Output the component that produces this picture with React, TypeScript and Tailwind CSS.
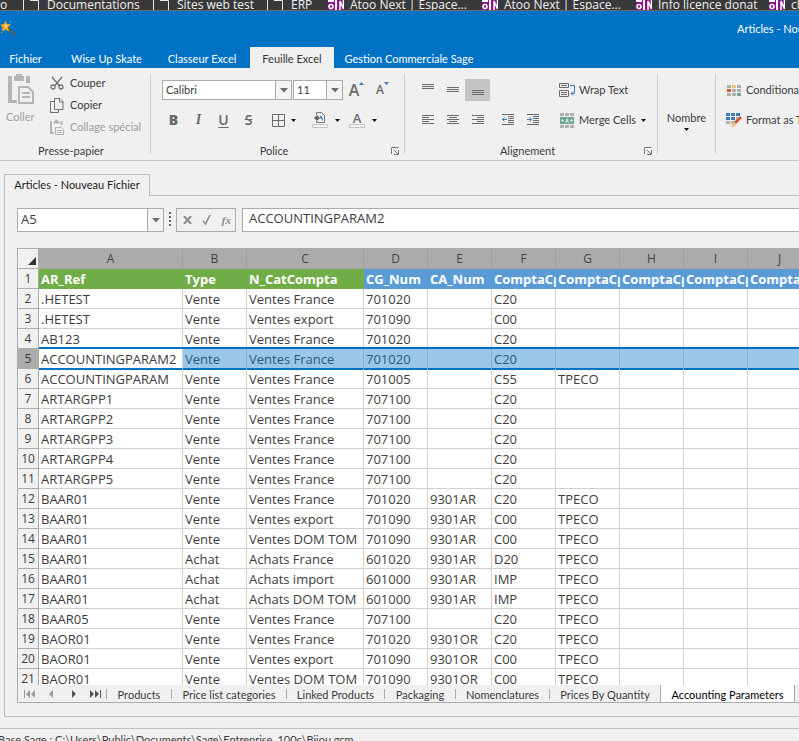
import type { ReactNode } from 'react';

const bookmarks = [
  { label: 'Documentations', kind: 'page', width: 'w-[130px]' },
  { label: 'Sites web test', kind: 'page', width: 'w-[114px]' },
  { label: 'ERP', kind: 'page', width: 'w-[61px]' },
  { label: 'Atoo Next | Espace...', kind: 'atoo', width: 'w-[154px]' },
  { label: 'Atoo Next | Espace...', kind: 'atoo', width: 'w-[154px]' },
  { label: 'Info licence donat', kind: 'atoo', width: 'w-[133px]' },
  { label: 'cl', kind: 'atoo', width: 'w-[133px]' },
];

const ribbonTabs = [
  { label: 'Fichier', width: 'w-[51px]' },
  { label: 'Wise Up Skate', width: 'w-[111px]' },
  { label: 'Classeur Excel', width: 'w-[80px]' },
  { label: 'Feuille Excel', width: 'w-[84px] ml-2', active: true },
  { label: 'Gestion Commerciale Sage', width: 'w-[150px]' },
];

const columns = [
  { letter: 'A', title: 'AR_Ref', width: 'w-[144px]' },
  { letter: 'B', title: 'Type', width: 'w-[64px]' },
  { letter: 'C', title: 'N_CatCompta', width: 'w-[117px]' },
  { letter: 'D', title: 'CG_Num', width: 'w-[64px]' },
  { letter: 'E', title: 'CA_Num', width: 'w-[64px]' },
  { letter: 'F', title: 'ComptaCpt', width: 'w-[64px]' },
  { letter: 'G', title: 'ComptaCpt', width: 'w-[64px]' },
  { letter: 'H', title: 'ComptaCpt', width: 'w-[64px]' },
  { letter: 'I', title: 'ComptaCpt', width: 'w-[64px]' },
  { letter: 'J', title: 'ComptaCpt', width: 'w-[64px]' },
];

const rows = [
  ['.HETEST', 'Vente', 'Ventes France', '701020', '', 'C20', ''],
  ['.HETEST', 'Vente', 'Ventes export', '701090', '', 'C00', ''],
  ['AB123', 'Vente', 'Ventes France', '701020', '', 'C20', ''],
  ['ACCOUNTINGPARAM2', 'Vente', 'Ventes France', '701020', '', 'C20', ''],
  ['ACCOUNTINGPARAM', 'Vente', 'Ventes France', '701005', '', 'C55', 'TPECO'],
  ['ARTARGPP1', 'Vente', 'Ventes France', '707100', '', 'C20', ''],
  ['ARTARGPP2', 'Vente', 'Ventes France', '707100', '', 'C20', ''],
  ['ARTARGPP3', 'Vente', 'Ventes France', '707100', '', 'C20', ''],
  ['ARTARGPP4', 'Vente', 'Ventes France', '707100', '', 'C20', ''],
  ['ARTARGPP5', 'Vente', 'Ventes France', '707100', '', 'C20', ''],
  ['BAAR01', 'Vente', 'Ventes France', '701020', '9301AR', 'C20', 'TPECO'],
  ['BAAR01', 'Vente', 'Ventes export', '701090', '9301AR', 'C00', 'TPECO'],
  ['BAAR01', 'Vente', 'Ventes DOM TOM', '701090', '9301AR', 'C00', 'TPECO'],
  ['BAAR01', 'Achat', 'Achats France', '601020', '9301AR', 'D20', 'TPECO'],
  ['BAAR01', 'Achat', 'Achats import', '601000', '9301AR', 'IMP', 'TPECO'],
  ['BAAR01', 'Achat', 'Achats DOM TOM', '601000', '9301AR', 'IMP', 'TPECO'],
  ['BAAR05', 'Vente', 'Ventes France', '707100', '', 'C20', 'TPECO'],
  ['BAOR01', 'Vente', 'Ventes France', '701020', '9301OR', 'C20', 'TPECO'],
  ['BAOR01', 'Vente', 'Ventes export', '701090', '9301OR', 'C00', 'TPECO'],
  ['BAOR01', 'Vente', 'Ventes DOM TOM', '701090', '9301OR', 'C00', 'TPECO'],
];

const sheetTabs = [
  { label: 'Products', width: 'w-[65px]' },
  { label: 'Price list categories', width: 'w-[115px]' },
  { label: 'Linked Products', width: 'w-[98px]' },
  { label: 'Packaging', width: 'w-[71px]' },
  { label: 'Nomenclatures', width: 'w-[94px]' },
  { label: 'Prices By Quantity', width: 'w-[111px]' },
  { label: 'Accounting Parameters', width: 'w-[134px]', active: true },
];

const selectedRow = 5;

function PageIcon() {
  return (
    <svg width="16" height="10" viewBox="0 0 16 10" fill="none" stroke="#e8e8e8">
      <path d="M0.5 0v10M7 0.5h8.5V10" />
    </svg>
  );
}

function AtooIcon() {
  return (
    <svg width="16" height="10" viewBox="0 0 16 10" fill="none">
      <path d="M0 0h16v10H0z" fill="#8b128b" />
      <path d="M0 0h6v2H0zM7 0h2v10H7z" fill="#fff" />
      <circle cx="3" cy="6.5" r="2" stroke="#fff" strokeWidth="1.500" />
      <path d="M12 10V1l3.5 8V0" stroke="#fff" strokeWidth="1.5" />
    </svg>
  );
}

function WandIcon() {
  return (
    <svg width="16" height="16" viewBox="0 0 16 16">
      <path d="M8 8l7 7" stroke="#6b5a45" strokeWidth="2" />
      <path d="M5.5 1l1.500 3 4 .3-3 3 1 4.200-3.500-2-3.500 2 .5-4-2-3 3.500-.5z" fill="#f7a823" />
      <path d="M6 4l1 2-1 2-2-2z" fill="#ffe27a" />
      <path d="M10 1h1v1h-1zM1 12h1v1H1z" fill="#f7a823" />
    </svg>
  );
}

function Caret() {
  return (
    <svg width="5" height="3" viewBox="0 0 5 3" className="shrink-0">
      <path d="M0 0h5L2.500 3z" fill="#111" />
    </svg>
  );
}

function DropArrow() {
  return (
    <svg width="8" height="5" viewBox="0 0 8 5">
      <path d="M0 0h8L4 4.500z" fill="#6d6d6d" />
    </svg>
  );
}

function PasteIcon() {
  return (
    <svg width="26" height="30" viewBox="0 0 26 30" fill="none">
      <path d="M0 2h4v24h5v3H0zM18 2h4v7h-4z" fill="#b5b5b5" />
      <path d="M6 2h2V0h6v2h2v5H6z" fill="#b5b5b5" />
      <path d="M11 13h9l5 5v11H11z" stroke="#b5b5b5" strokeWidth="2" />
      <path d="M14 19h8M14 23h8" stroke="#b5b5b5" strokeWidth="2" />
    </svg>
  );
}

function CutIcon() {
  return (
    <svg width="14" height="14" viewBox="0 0 14 14" fill="none" stroke="#6f6f6f">
      <path d="M2 1l7.500 9M12 1L4.500 10" strokeWidth="1.3" />
      <circle cx="3" cy="11" r="2" strokeWidth="1.300" />
      <circle cx="11" cy="11" r="2" strokeWidth="1.300" />
    </svg>
  );
}

function CopyIcon() {
  return (
    <svg width="14" height="15" viewBox="0 0 14 15" fill="#f0f0f0" stroke="#6f6f6f">
      <path d="M4 3.500H.5v11h8V12" />
      <path d="M4.500 .5h5.500l3 3v8H4.500z" />
      <path d="M9.500 .5v3.500H13" />
    </svg>
  );
}

function PasteSpecialIcon() {
  return (
    <svg width="14" height="15" viewBox="0 0 14 15" fill="none" stroke="#b5b5b5">
      <path d="M1 1v12h3M11.500 1v4" strokeWidth="2" />
      <path d="M3.500 2.500h6M5 1h3" strokeWidth="2" />
      <path d="M5.500 7.500h6l2 2v5h-8z" fill="#f0f0f0" />
      <path d="M7 10.500h5M7 12.500h5" />
    </svg>
  );
}

function LauncherIcon() {
  return (
    <svg width="8" height="8" viewBox="0 0 8 8" fill="none" stroke="#777">
      <path d="M.5 7V.5H7.500M3 3l4 4M7.500 3v4.500H3" />
    </svg>
  );
}

function LinesIcon({ d }: { d: string }) {
  return (
    <svg width="12" height="12" viewBox="0 0 12 12" fill="none" stroke="#6a6a6a">
      <path d={d} />
    </svg>
  );
}

function IndentIcon({ out }: { out?: boolean }) {
  return (
    <svg width="12" height="12" viewBox="0 0 12 12" fill="none" stroke="#6a6a6a">
      <path d="M0 .5h12M6 2.500h6M6 4.500h6M6 6.500h6M6 8.500h6M0 10.500h12" />
      <path d={out ? 'M0 5.500h5M2.500 3.500l-2 2 2 2' : 'M0 5.500h5M2.500 3.500l2 2-2 2'} stroke="#3d7ab8" />
    </svg>
  );
}

function BordersIcon() {
  return (
    <svg width="13" height="13" viewBox="0 0 13 13" fill="none" stroke="#6a6a6a">
      <path d="M.5.5h12v12H.5zM6.500.5v12M.5 6.500h12" />
    </svg>
  );
}

function FillIcon() {
  return (
    <svg width="16" height="16" viewBox="0 0 16 16" fill="none">
      <path d="M4.500 3V.5h5l3 3v7h-8V9" stroke="#777" />
      <path d="M2 6l3-3 3 3-3 3z" fill="#666" />
      <path d="M8 4c2 0 3 2 3 5-1-1-1-2-3-3z" fill="#3d7ab8" />
      <path d="M.5 12.500h15v3H.5z" stroke="#c4c4c4" fill="#f4f4f4" />
    </svg>
  );
}

function WrapIcon() {
  return (
    <svg width="16" height="15" viewBox="0 0 16 15" fill="none" stroke="#6a6a6a">
      <path d="M.5.5h9v4h-9zM2 2.500h6M.5 7.500h9v6h-9zM2 9.500h6M2 11.500h6" />
      <path d="M11 2.500h4.500v8H12M14 8.500l-2 2 2 2" stroke="#3d7ab8" />
    </svg>
  );
}

function MergeIcon() {
  return (
    <svg width="14" height="15" viewBox="0 0 14 15" fill="none">
      <path d="M0 0h4v3H0zM5 0h4v3H5zM10 0h4v3h-4zM0 12h4v3H0zM5 12h4v3H5zM10 12h4v3h-4z" fill="#b0b0b0" />
      <path d="M0 4h14v7H0z" fill="#6fa592" />
      <path d="M1 7.500h3M2.500 6v3M10 7.500h3M11.500 6v3M5.500 10L7 5.500 8.500 10M6 8.500h2" stroke="#e4f0ec" strokeWidth=".8" />
    </svg>
  );
}

function ConditionalIcon() {
  return (
    <svg width="14" height="11" viewBox="0 0 14 11">
      <path d="M0 0h4v3H0zM10 0h4v3h-4zM5 4h4v3H5zM10 4h4v3h-4zM0 8h4v3H0zM5 8h4v3H5z" fill="#b0b0b0" />
      <path d="M5 0h4v3H5z" fill="#eac282" />
      <path d="M0 4h4v3H0z" fill="#d65532" />
      <path d="M10 8h4v3h-4z" fill="#6fa592" />
    </svg>
  );
}

function FormatTableIcon() {
  return (
    <svg width="16" height="15" viewBox="0 0 16 15">
      <path d="M0 0h4v3H0zM5 0h4v3H5zM10 0h4v3h-4zM0 4h4v3H0zM5 4h4v3H5z" fill="#3d7ab8" />
      <path d="M10 4h3v3h-3zM0 8h4v3H0zM5 8h4v3H5z" fill="#b0b0b0" />
      <path d="M14 3l2 2-6 6-2-2z" fill="#d65532" />
      <path d="M8 9l2 2c-1 3-3 3-5 3 1-1 1-4 3-5z" fill="#eac282" />
    </svg>
  );
}

function NavIcon({ d, dim }: { d: string; dim?: boolean }) {
  return (
    <svg width="11" height="8" viewBox="0 0 11 8" fill={dim ? '#9a9a9a' : '#555'}>
      <path d={d} />
    </svg>
  );
}

function Separator() {
  return <div className="my-1.5 w-px shrink-0 bg-[#cdcdcd]" />;
}

function Group({ label, width, launcher, children }: { label?: string; width: string; launcher?: boolean; children: ReactNode }) {
  return (
    <section className={`flex shrink-0 flex-col pt-1 ${width}`}>
      <div className="h-[66px]">{children}</div>
      {label && (
        <div className={`mt-[5px] flex h-4 items-center ${launcher ? 'pr-[5px] pl-1.5' : 'pr-2'}`}>
          <span className="flex-1 text-center">{label}</span>
          {launcher && (
            <button aria-label={`Options ${label}`}>
              <LauncherIcon />
            </button>
          )}
        </div>
      )}
    </section>
  );
}

function Combo({ label, value, width }: { label: string; value: string; width: string }) {
  return (
    <div className={`flex h-5 border border-[#ababab] bg-white ${width}`}>
      <select aria-label={label} className="min-w-0 flex-1 appearance-none pl-[3px] outline-none">
        <option>{value}</option>
      </select>
      <span className="flex w-4 items-center justify-center border-l border-[#ababab] bg-[#f4f4f4]">
        <DropArrow />
      </span>
    </div>
  );
}

function IconButton({ label, active, children }: { label: string; active?: boolean; children: ReactNode }) {
  return (
    <button
      aria-label={label}
      className={`flex h-[22px] w-[25px] items-center justify-center ${active ? 'bg-[#c5c5c5]' : ''}`}
    >
      {children}
    </button>
  );
}

function TitleBar() {
  return (
    <header className="shrink-0 bg-[#0072c6] text-white">
      <div className="flex h-9 justify-between">
        <div className="pt-[9px]">
          <WandIcon />
        </div>
        <h1 className="w-[62px] overflow-hidden pt-2.5 leading-4 whitespace-nowrap">Articles - Nouveau Fichier</h1>
      </div>
      <nav className="flex h-[21px] whitespace-nowrap">
        {ribbonTabs.map((tab) => (
          <button
            key={tab.label}
            className={`shrink-0 pt-1 ${tab.width} ${tab.active ? 'bg-[#f0f0f0] text-[#333]' : ''}`}
          >
            {tab.label}
          </button>
        ))}
      </nav>
    </header>
  );
}

function Ribbon() {
  return (
    <div className="flex h-[93px] shrink-0 overflow-hidden border-b border-[#c6c6c6] whitespace-nowrap">
      <Group label="Presse-papier" width="w-[150px]">
        <div className="flex">
          <button className="flex w-[50px] flex-col items-start pt-0.5 pl-2 text-[#9d9d9d]">
            <PasteIcon />
            <span className="-ml-0.5 pt-[5px] leading-4">Coller</span>
          </button>
          <div className="flex flex-col">
            <button className="flex h-[22px] items-center gap-1.5">
              <CutIcon />
              Couper
            </button>
            <button className="flex h-[22px] items-center gap-1.5">
              <CopyIcon />
              Copier
            </button>
            <button className="flex h-[22px] items-center gap-1.5 text-[#9d9d9d]">
              <PasteSpecialIcon />
              Collage spécial
            </button>
          </div>
        </div>
      </Group>
      <Separator />
      <Group label="Police" width="w-[253px]" launcher>
        <div className="flex h-9 items-center gap-px pl-[11px]">
          <Combo label="Police" value="Calibri" width="w-[130px]" />
          <Combo label="Taille" value="11" width="w-[50px]" />
          <button aria-label="Agrandir" className="flex w-[25px] justify-center font-['Open_Sans',sans-serif] text-base leading-4 font-semibold text-[#6a6a6a]">
            A
            <svg width="5" height="3" viewBox="0 0 5 3">
              <path d="M0 3l2.500-3L5 3z" fill="#3d7ab8" />
            </svg>
          </button>
          <button aria-label="Réduire" className="flex w-[25px] justify-center font-['Open_Sans',sans-serif] text-xs leading-4 font-semibold text-[#6a6a6a]">
            A
            <svg width="5" height="3" viewBox="0 0 5 3">
              <path d="M0 0h5L2.500 3z" fill="#3d7ab8" />
            </svg>
          </button>
        </div>
        <div className="flex h-6 items-center pl-2.5 font-['Open_Sans',sans-serif] text-sm font-semibold text-[#6a6a6a]">
          <button className="w-[25px] font-extrabold">B</button>
          <button className="w-[25px] font-['Liberation_Serif',serif] italic">I</button>
          <button className="w-[25px] underline underline-offset-2">U</button>
          <button className="w-[25px] line-through">S</button>
          <button aria-label="Bordures" className="flex w-10 items-center gap-1.5 pl-[11px]">
            <BordersIcon />
            <Caret />
          </button>
          <button aria-label="Remplissage" className="ml-[11px] flex items-center gap-[7px]">
            <FillIcon />
            <Caret />
          </button>
          <button aria-label="Couleur du texte" className="ml-[9px] flex items-center gap-[7px]">
            <span className="flex w-4 flex-col items-center text-[13px] leading-3">
              A
              <span className="h-1 w-4 border border-[#c4c4c4] bg-[#f4f4f4]" />
            </span>
            <Caret />
          </button>
        </div>
      </Group>
      <Separator />
      <Group label="Alignement" width="w-[252px]" launcher>
        <div className="flex">
          <div className="w-[154px] pl-2.5">
            <div className="flex h-9 items-center">
              <IconButton label="Haut">
                <LinesIcon d="M0 .5h12M0 2.500h12M0 4.500h12" />
              </IconButton>
              <IconButton label="Milieu">
                <LinesIcon d="M0 3.500h12M0 5.500h12M0 7.500h12" />
              </IconButton>
              <IconButton label="Bas" active>
                <LinesIcon d="M0 6.500h12M0 8.500h12M0 10.500h12" />
              </IconButton>
            </div>
            <div className="flex h-6 items-center">
              <IconButton label="Gauche">
                <LinesIcon d="M0 1.500h12M0 3.500h7M0 5.500h12M0 7.500h7M0 9.500h12" />
              </IconButton>
              <IconButton label="Centrer">
                <LinesIcon d="M0 1.500h12M2 3.500h8M0 5.500h12M2 7.500h8M0 9.500h12" />
              </IconButton>
              <IconButton label="Droite">
                <LinesIcon d="M0 1.500h12M5 3.500h7M0 5.500h12M5 7.500h7M0 9.500h12" />
              </IconButton>
              <span className="w-[5px]" />
              <IconButton label="Diminuer le retrait">
                <IndentIcon out />
              </IconButton>
              <IconButton label="Augmenter le retrait">
                <IndentIcon />
              </IconButton>
            </div>
          </div>
          <div>
            <button className="flex h-9 items-center gap-1">
              <WrapIcon />
              Wrap Text
            </button>
            <button className="flex h-6 items-center gap-[5px] pl-px">
              <MergeIcon />
              Merge Cells
              <Caret />
            </button>
          </div>
        </div>
      </Group>
      <Separator />
      <Group width="w-[57px]">
        <button className="flex w-full flex-col items-center gap-0.5 pt-[38px] leading-4">
          Nombre
          <Caret />
        </button>
      </Group>
      <Separator />
      <Group width="w-[160px]">
        <button className="flex h-9 items-center gap-[5px] pl-[11px]">
          <ConditionalIcon />
          Conditional Formatting
        </button>
        <button className="flex h-6 items-center gap-1 pl-2.5">
          <FormatTableIcon />
          Format as Table
        </button>
      </Group>
    </div>
  );
}

function FormulaBar() {
  return (
    <div className="flex h-6 shrink-0 font-['Open_Sans',sans-serif] text-[13px]">
      <div className="flex w-[147px] shrink-0 border border-[#ababab] bg-white">
        <input aria-label="Cellule" defaultValue="A5" className="min-w-0 flex-1 pl-[3px] outline-none" />
        <button aria-label="Liste des cellules" className="flex w-4 items-center justify-center border-l border-[#ababab] bg-[#f4f4f4]">
          <DropArrow />
        </button>
      </div>
      <svg width="12" height="24" viewBox="0 0 12 24" className="shrink-0">
        <path d="M6 4v15" stroke="#666" strokeWidth="2" strokeDasharray="2 2" />
      </svg>
      <div className="flex w-[60px] shrink-0 items-center justify-between border border-[#ababab] pr-1 pl-1.5 text-[#888]">
        <button aria-label="Annuler">
          <svg width="9" height="8" viewBox="0 0 9 8" fill="none" stroke="#8a8a8a" strokeWidth="2">
            <path d="M1 0l7 8M8 0L1 8" />
          </svg>
        </button>
        <button aria-label="Valider">
          <svg width="9" height="10" viewBox="0 0 9 10" fill="none" stroke="#8a8a8a" strokeWidth="1.500">
            <path d="M1 6l2.500 3L8 0" />
          </svg>
        </button>
        <button className="font-['Liberation_Serif',serif] text-[11px] font-bold italic">fx</button>
      </div>
      <input
        aria-label="Formule"
        defaultValue="ACCOUNTINGPARAM2"
        className="ml-1.5 min-w-0 flex-1 border border-r-0 border-[#ababab] bg-white pb-0.5 pl-1.5 outline-none"
      />
    </div>
  );
}

function Sheet() {
  return (
    <div className="min-h-0 flex-1 overflow-hidden bg-white">
      <table className="w-[794px] table-fixed border-separate border-spacing-0 font-['Open_Sans',sans-serif] text-[13px] leading-[18px] whitespace-nowrap text-[#3c3c3c]">
        <colgroup>
          <col className="w-[21px]" />
          {columns.map((col) => (
            <col key={col.letter} className={col.width} />
          ))}
        </colgroup>
        <thead className="text-xs">
          <tr className="h-5">
            <th className="border-r border-b border-[#ababab] bg-[#f0f0f0]">
              <svg width="8" height="8" viewBox="0 0 8 8" className="mt-1 ml-2.5">
                <path d="M8 0v8H0z" fill="#333" />
              </svg>
            </th>
            {columns.map((col) => (
              <th key={col.letter} className="border-r border-b border-r-[#9f9f9f] border-b-[#ababab] bg-[#ababab] font-normal text-[#444]">
                {col.letter}
              </th>
            ))}
          </tr>
        </thead>
        <tbody>
          <tr className="h-5">
            <th className="border-r border-b border-[#ababab] bg-[#f0f0f0] pt-px text-xs leading-[18px] font-normal">1</th>
            {columns.map((col, i) => (
              <th
                key={col.letter}
                className={`overflow-hidden pl-0.5 text-left font-bold text-white ${i < 3 ? 'bg-[#70ad47]' : 'bg-[#5b9bd5]'}`}
              >
                {col.title}
              </th>
            ))}
          </tr>
          {rows.map((row, i) => {
            const n = i + 2;
            const selected = n === selectedRow;
            return (
              <tr key={n} className="h-5">
                <th
                  className={`border-r border-b border-[#ababab] pt-px text-xs leading-[18px] font-normal ${selected ? 'bg-[#ababab]' : 'bg-[#f0f0f0]'}`}
                >
                  {n}
                </th>
                {columns.map((col, c) => {
                  let look = 'border-[#d0d0d0]';
                  if (selected) {
                    look = 'border-b-[#0072c6] shadow-[0_-2px_0_#0072c6,0_1px_0_#0072c6]';
                    look += c === 0 ? ' border-r-[#d0d0d0]' : ' border-r-[#86b3d5] bg-[#99c7e8] text-[#245a85]';
                  }
                  return (
                    <td key={col.letter} className={`overflow-hidden border-r border-b pt-px pl-0.5 ${look}`}>
                      {row[c]}
                    </td>
                  );
                })}
              </tr>
            );
          })}
        </tbody>
      </table>
    </div>
  );
}

function SheetTabs() {
  return (
    <nav className="flex h-[18px] shrink-0 items-stretch overflow-hidden border-b border-[#ababab] whitespace-nowrap">
      <div className="flex w-[88px] shrink-0 items-center gap-[11px] pl-1.5">
        <button aria-label="Première feuille">
          <NavIcon dim d="M0 0h1v8H0zM6 0v8L2 4zM11 0v8L7 4z" />
        </button>
        <button aria-label="Feuille précédente">
          <NavIcon dim d="M7 0v8L3 4z" />
        </button>
        <button aria-label="Feuille suivante">
          <NavIcon d="M4 0v8l4-4z" />
        </button>
        <button aria-label="Dernière feuille">
          <NavIcon d="M0 0v8l4-4zM5 0v8l4-4zM10 0h1v8h-1z" />
        </button>
      </div>
      {sheetTabs.map((tab) => (
        <div key={tab.label} className={`flex shrink-0 items-center ${tab.width} ${tab.active ? 'bg-white text-black' : ''}`}>
          <span className={`w-px bg-[#ababab] ${tab.active ? 'h-full' : 'h-2.5'}`} />
          <button className="flex-1 pt-0.5 leading-4">{tab.label}</button>
        </div>
      ))}
      <span className="w-px shrink-0 bg-[#ababab]" />
    </nav>
  );
}

export default function App() {
  return (
    <div className="flex h-screen flex-col overflow-hidden bg-[#f0f0f0] font-['Lato',sans-serif] text-[11px] text-[#3c3c3c]">
      <div className="flex h-[11px] shrink-0 overflow-hidden border-b border-[#6a6a6a] bg-[#39393b] font-['Open_Sans',sans-serif] text-xs leading-4 whitespace-nowrap text-[#f0f0f0]">
        <span className="-mt-[3px] w-[23px] shrink-0">o</span>
        {bookmarks.map((item, i) => (
          <a key={i} href="#" className={`flex shrink-0 ${item.kind === 'page' ? 'gap-2' : 'gap-1.5'} ${item.width}`}>
            {item.kind === 'page' ? <PageIcon /> : <AtooIcon />}
            <span className="-mt-[3px]">{item.label}</span>
          </a>
        ))}
      </div>
      <TitleBar />
      <Ribbon />
      <main className="flex min-h-0 flex-1 flex-col pt-[13px] pb-[11px] pl-1">
        <div className="flex h-[22px] shrink-0">
          <button className="w-[146px] border border-b-0 border-[#bdbdbd] text-[#222]">Articles - Nouveau Fichier</button>
          <div className="flex-1 border-b border-[#bdbdbd]" />
        </div>
        <div className="flex min-h-0 flex-1 flex-col border-b border-l border-[#bdbdbd] pt-3 pb-[13px] pl-3">
          <FormulaBar />
          <div className="mt-4 flex min-h-0 flex-1 flex-col border-t border-l border-[#ababab]">
            <Sheet />
            <SheetTabs />
          </div>
        </div>
      </main>
      <footer className="h-[13px] shrink-0 overflow-hidden border-t border-[#bdbdbd] pt-[3px] leading-4 whitespace-nowrap">
        <span className="-ml-0.5">Base Sage : C:\Users\Public\Documents\Sage\Entreprise_100c\Bijou.gcm</span>
      </footer>
    </div>
  );
}
